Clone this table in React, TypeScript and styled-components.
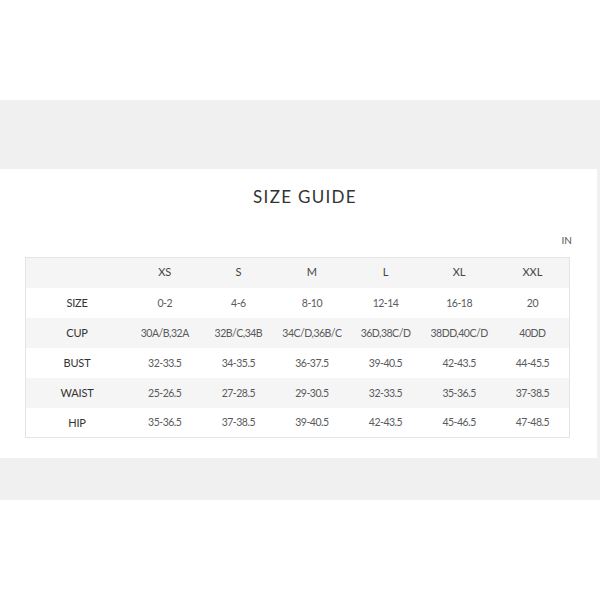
import React from "react";
import styled, { createGlobalStyle } from "styled-components";

const GlobalStyle = createGlobalStyle`
  html, body {
    margin: 0;
    padding: 0;
    background: #ffffff;
    font-family: "Lato", "Open Sans", sans-serif;
  }
`;

const columns = ["XS", "S", "M", "L", "XL", "XXL"];

const rows: { label: string; values: string[] }[] = [
  { label: "SIZE", values: ["0-2", "4-6", "8-10", "12-14", "16-18", "20"] },
  {
    label: "CUP",
    values: ["30A/B,32A", "32B/C,34B", "34C/D,36B/C", "36D,38C/D", "38DD,40C/D", "40DD"],
  },
  { label: "BUST", values: ["32-33.5", "34-35.5", "36-37.5", "39-40.5", "42-43.5", "44-45.5"] },
  { label: "WAIST", values: ["25-26.5", "27-28.5", "29-30.5", "32-33.5", "35-36.5", "37-38.5"] },
  { label: "HIP", values: ["35-36.5", "37-38.5", "39-40.5", "42-43.5", "45-46.5", "47-48.5"] },
];

export default function App() {
  return (
    <>
      <GlobalStyle />
      <Page>
        <TopSpace />
        <Backdrop>
          <Modal>
            <Title>SIZE GUIDE</Title>
            <UnitRow>
              <Unit>IN</Unit>
            </UnitRow>
            <Table>
              <thead>
                <Row shaded>
                  <LabelCell />
                  {columns.map((c) => (
                    <HeadCell key={c}>{c}</HeadCell>
                  ))}
                </Row>
              </thead>
              <tbody>
                {rows.map((r, i) => (
                  <Row key={r.label} shaded={i % 2 === 1}>
                    <LabelCell>{r.label}</LabelCell>
                    {r.values.map((v, j) => (
                      <Cell key={j}>{v}</Cell>
                    ))}
                  </Row>
                ))}
              </tbody>
            </Table>
          </Modal>
        </Backdrop>
      </Page>
    </>
  );
}

const Page = styled.div`
  width: 600px;
  height: 600px;
  background: #ffffff;
`;

const TopSpace = styled.div`
  height: 100px;
`;

const Backdrop = styled.div`
  background: #f0f0f0;
  padding: 69px 0 42px;
`;

const Modal = styled.div`
  width: 598px;
  height: 289px;
  box-sizing: border-box;
  background: #ffffff;
  padding: 18px 25px 0 25px;
  border-right: 1px solid #f2f2f2;
`;

const Title = styled.h2`
  margin: 0;
  text-align: center;
  font-family: "Lato", "Open Sans", sans-serif;
  font-size: 17px;
  font-weight: 400;
  letter-spacing: 1.3px;
  color: #333333;
  line-height: 20px;
  padding-left: 13px;
`;

const UnitRow = styled.div`
  display: flex;
  justify-content: flex-end;
  margin-top: 25px;
  height: 25px;
`;

const Unit = styled.span`
  font-size: 10px;
  color: #555555;
  line-height: 16px;
`;

const Table = styled.table`
  width: 545px;
  border-collapse: collapse;
  border: 1px solid #e4e4e4;
  table-layout: fixed;
  & td:first-child {
    width: 102px;
  }
`;

const Row = styled.tr<{ shaded?: boolean }>`
  height: 30px;
  background: ${(p) => (p.shaded ? "#f5f5f5" : "#ffffff")};
`;

const Cell = styled.td`
  padding: 0;
  text-align: center;
  font-size: 10.5px;
  letter-spacing: -0.5px;
  color: #5a5a5a;
  white-space: nowrap;
`;

const HeadCell = styled(Cell)`
  font-size: 11px;
  letter-spacing: 0;
  color: #444444;
  padding-bottom: 3px;
`;

const LabelCell = styled(Cell)`
  font-size: 11px;
  letter-spacing: -0.2px;
  color: #333333;
`;
